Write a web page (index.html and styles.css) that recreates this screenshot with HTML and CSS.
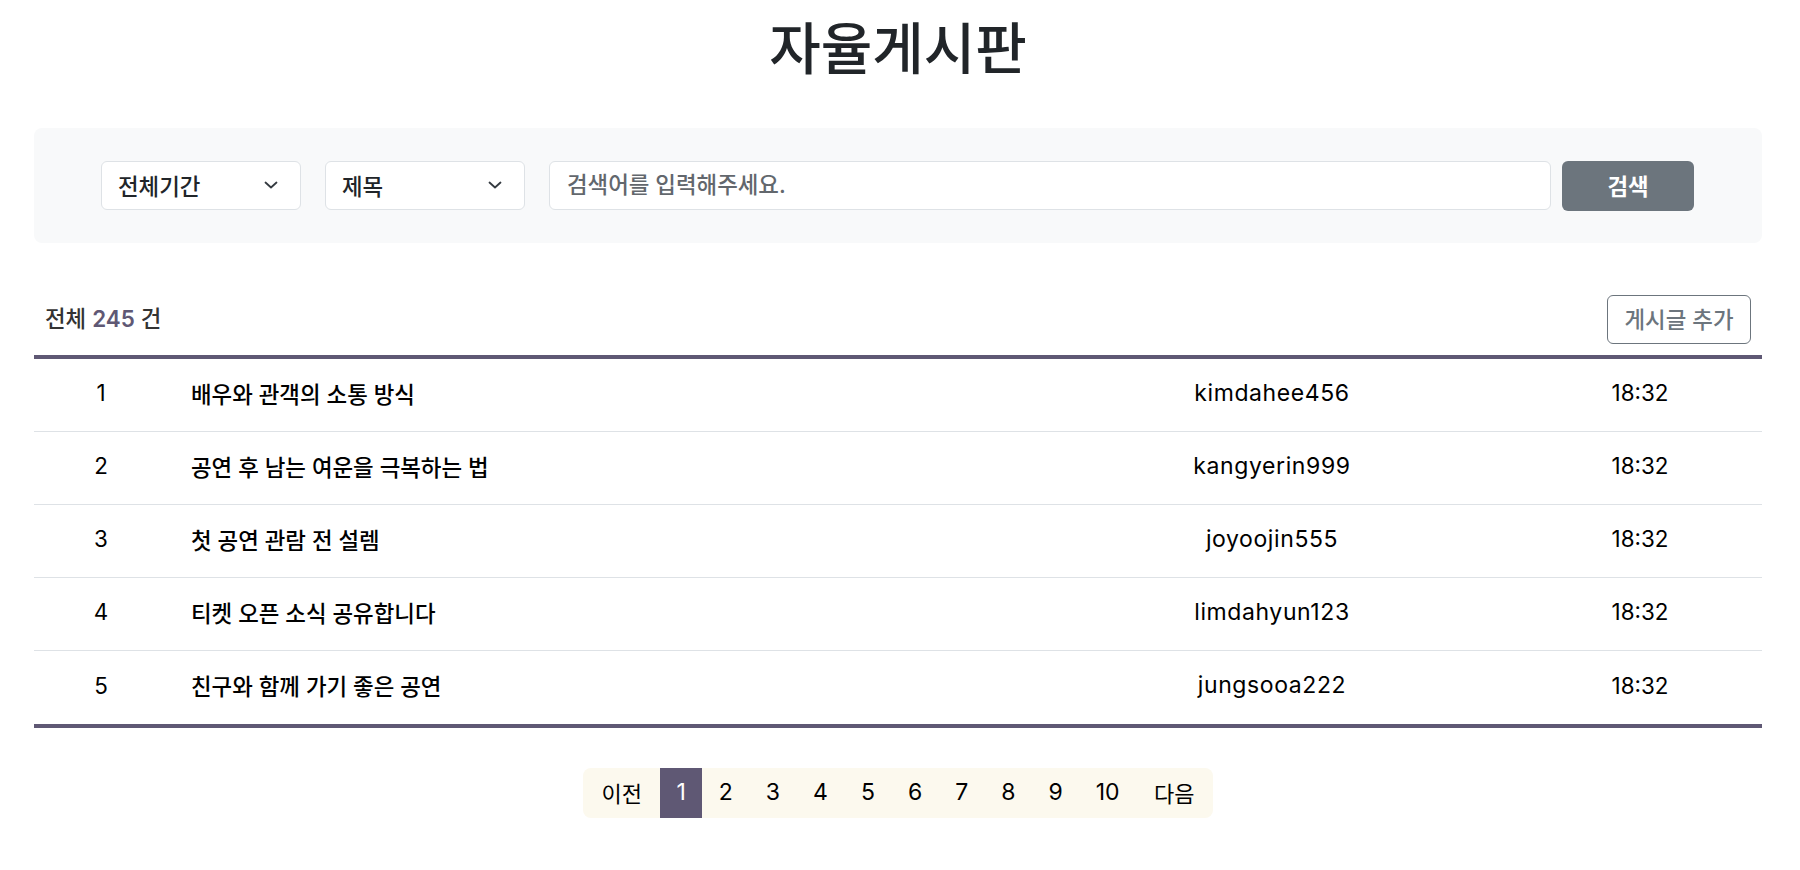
FILE: index.html
```html
<!DOCTYPE html>
<html lang="ko">
<head>
<meta charset="utf-8">
<title>자율게시판</title>
<link rel="stylesheet" href="styles.css">
</head>
<body>
<div class="page">
  <h1 class="title">자율게시판</h1>

  <form class="search">
    <div class="select">
      <span>전체기간</span>
      <svg class="chev" width="14" height="8" viewBox="0 0 14 8"><path d="M1.5 1.5 L7 6.5 L12.5 1.5" fill="none" stroke="#343a40" stroke-width="1.8" stroke-linecap="round" stroke-linejoin="round"/></svg>
    </div>
    <div class="select">
      <span>제목</span>
      <svg class="chev" width="14" height="8" viewBox="0 0 14 8"><path d="M1.5 1.5 L7 6.5 L12.5 1.5" fill="none" stroke="#343a40" stroke-width="1.8" stroke-linecap="round" stroke-linejoin="round"/></svg>
    </div>
    <input class="search-input" type="text" placeholder="검색어를 입력해주세요.">
    <button class="search-btn" type="button">검색</button>
  </form>

  <div class="count-row">
    <p class="count">전체 <strong>245</strong> 건</p>
    <button class="add-btn" type="button">게시글 추가</button>
  </div>

  <div class="board">
    <div class="row"><span class="num">1</span><span class="subject">배우와 관객의 소통 방식</span><span class="author">kimdahee456</span><span class="time">18:32</span></div>
    <div class="row"><span class="num">2</span><span class="subject">공연 후 남는 여운을 극복하는 법</span><span class="author">kangyerin999</span><span class="time">18:32</span></div>
    <div class="row"><span class="num">3</span><span class="subject">첫 공연 관람 전 설렘</span><span class="author">joyoojin555</span><span class="time">18:32</span></div>
    <div class="row"><span class="num">4</span><span class="subject">티켓 오픈 소식 공유합니다</span><span class="author">limdahyun123</span><span class="time">18:32</span></div>
    <div class="row"><span class="num">5</span><span class="subject">친구와 함께 가기 좋은 공연</span><span class="author">jungsooa222</span><span class="time">18:32</span></div>
  </div>

  <nav class="pagination">
    <div class="pages">
      <a href="#" class="edge">이전</a>
      <a href="#" class="active">1</a>
      <a href="#">2</a>
      <a href="#">3</a>
      <a href="#">4</a>
      <a href="#">5</a>
      <a href="#">6</a>
      <a href="#">7</a>
      <a href="#">8</a>
      <a href="#">9</a>
      <a href="#">10</a>
      <a href="#" class="edge">다음</a>
    </div>
  </nav>
</div>
</body>
</html>
```

FILE: styles.css
```css
body {
  margin: 0;
  background: #fff;
  color: #000;
  font-family: Inter, "Noto Sans CJK KR", sans-serif;
}

.page {
  margin: 0 38px 0 34px;
}

.title {
  margin: 0 0 48px;
  padding-top: 18px;
  height: 62px;
  line-height: 62px;
  text-align: center;
  font-size: 56px;
  font-weight: 500;
  color: #212529;
}

.search {
  box-sizing: border-box;
  height: 115px;
  margin: 0;
  padding: 0 68px 0 67px;
  background: #f8f9fa;
  border-radius: 8px;
  display: flex;
  align-items: center;
}

.select {
  box-sizing: border-box;
  width: 200px;
  height: 49px;
  margin-right: 24px;
  padding: 0 22px 2px 16px;
  border: 1px solid #dee2e6;
  border-radius: 6px;
  background: #fff;
  display: flex;
  align-items: center;
  justify-content: space-between;
  font-size: 22.4px;
  font-weight: 500;
  color: #212529;
}

.chev {
  display: block;
}

.search-input {
  box-sizing: border-box;
  flex: 1;
  min-width: 0;
  height: 49px;
  margin: 0 11px 0 0;
  padding: 0 17px 2px;
  border: 1px solid #dee2e6;
  border-radius: 6px;
  background: #fff;
  font-family: inherit;
  font-size: 22.4px;
  font-weight: 500;
  color: #212529;
  outline: none;
}

.search-input::placeholder {
  color: #62676d;
  opacity: 1;
}

.search-btn {
  width: 132px;
  height: 50px;
  padding-bottom: 3px;
  border: 0;
  border-radius: 6px;
  background: #6c757d;
  color: #fff;
  font-family: inherit;
  font-size: 22.4px;
  font-weight: 700;
}

.count-row {
  height: 49px;
  margin-top: 52px;
  padding: 0 11px;
  display: flex;
  align-items: center;
  justify-content: space-between;
}

.count {
  margin: 0 0 5px;
  font-size: 22.4px;
  font-weight: 500;
  color: #333;
}

.count strong {
  font-weight: 600;
  color: #5f5874;
}

.add-btn {
  box-sizing: border-box;
  width: 144px;
  height: 49px;
  padding: 0 0 3px;
  border: 1px solid #6c757d;
  border-radius: 6px;
  background: #fff;
  color: #6c757d;
  font-family: inherit;
  font-size: 22.4px;
  font-weight: 500;
}

.board {
  margin-top: 11px;
  border-top: 4px solid #5f5874;
  border-bottom: 4px solid #5f5874;
}

.row {
  box-sizing: border-box;
  height: 73px;
  padding-bottom: 5px;
  display: grid;
  grid-template-columns: 134px 1fr 492px 244px;
  align-items: center;
  border-bottom: 1px solid #dee2e6;
  font-size: 22.4px;
  font-weight: 400;
  color: #000;
}

.row:last-child {
  border-bottom: 0;
}

.num,
.author,
.time {
  text-align: center;
}

.author {
  letter-spacing: 0.6px;
  font-size: 23px;
}

.subject {
  padding-left: 23px;
  font-weight: 500;
}

.pagination {
  margin-top: 40px;
  display: flex;
  justify-content: center;
}

.pages {
  height: 50px;
  display: flex;
  background: #fcf9ee;
  border-radius: 8px;
  overflow: hidden;
}

.pages a {
  display: flex;
  align-items: center;
  padding: 0 16.5px 2px;
  font-size: 23px;
  font-weight: 400;
  color: #000;
  text-decoration: none;
}

.pages a.edge {
  padding: 0 18px 2px;
  font-size: 22px;
  font-weight: 400;
}

.pages a.active {
  background: #5f5874;
  color: #fff;
}
```
